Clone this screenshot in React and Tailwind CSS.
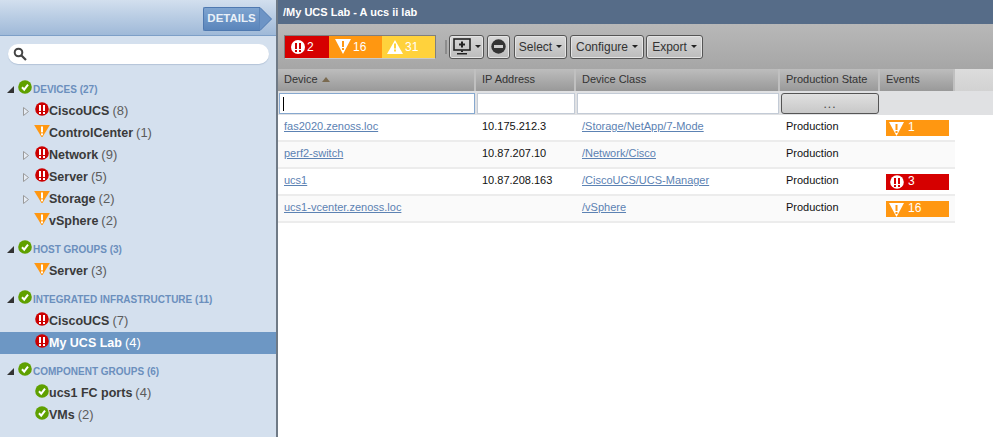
import React from 'react';

const sans = { fontFamily: '"Liberation Sans", Arial, sans-serif' };

const Bang = ({ x, y, h = 6, w = 2, fill = '#fff' }) => (
  <g fill={fill}>
    <rect x={x} y={y} width={w} height={h} />
    <rect x={x} y={y + h + 1} width={w} height={2} />
  </g>
);

const Critical = ({ size = 14 }) => (
  <svg width={size} height={size} viewBox="0 0 14 14" className="shrink-0">
    <circle cx="7" cy="7" r="6.8" fill="#cc0000" />
    <Bang x={4} y={3} />
    <Bang x={8} y={3} />
  </svg>
);

const Warn = ({ size = 16 }) => (
  <svg width={size} height={size * 0.8} viewBox="0 0 16 13" className="shrink-0">
    <path d="M0 0H16L8 13Z" fill="#ff9711" />
    <Bang x={7} y={1.5} h={6} />
  </svg>
);

const Ok = ({ size = 14 }) => (
  <svg width={size} height={size} viewBox="0 0 14 14" className="shrink-0">
    <circle cx="7" cy="7" r="6.8" fill="#5fa000" />
    <path d="M4 7.2 6.2 9.6 10 4.6" fill="none" stroke="#fff" strokeWidth="2" />
  </svg>
);

const icons = { critical: Critical, warn: Warn, ok: Ok };

const Expander = ({ open }) =>
  open ? (
    <svg width="7" height="7" viewBox="0 0 7 7" className="shrink-0"><path d="M7 0V7H0Z" fill="#333" /></svg>
  ) : (
    <svg width="6" height="9" viewBox="0 0 6 9" className="shrink-0"><path d="M.5.5 5.5 4.5.5 8.5Z" fill="#e6ecf4" stroke="#9a9a9a" /></svg>
  );

const GroupHead = ({ label, count }) => (
  <div className="flex h-[21px] items-center pl-[7px]">
    <Expander open />
    <span className="ml-[4px] -mt-[5px]"><Ok /></span>
    <span className="ml-px text-[10px] font-bold text-[#6b8fbd]">{label} <span>({count})</span></span>
  </div>
);

const Node = ({ icon, label, count, expand, selected }) => {
  const Icon = icons[icon];
  return (
    <div className={`flex h-[22px] items-center ${selected ? 'bg-[#6d97c4] text-white' : 'text-[#3a3a3a]'}`}>
      <span className="flex w-[34px] shrink-0 items-center justify-end pr-[5px]">
        {expand && <Expander />}
      </span>
      <span className="flex w-[15px] shrink-0 -mt-[4px] justify-center"><Icon /></span>
      <span className="text-[12.5px] font-bold">{label}</span>
      <span className={`ml-[3px] text-[13px] ${selected ? 'text-white' : 'text-[#5c5c5c]'}`}>({count})</span>
    </div>
  );
};

const Sidebar = () => (
  <aside className="flex w-[278px] shrink-0 flex-col border-r-2 border-[#6f7a86] bg-[#d4e0ee]">
    <div className="flex h-[36px] items-center justify-end border-b border-[#7d9fc7] bg-gradient-to-b from-[#d2dfee] to-[#9fb9d8] pr-[4px] pt-[2px]">
      <div className="flex h-[24px] items-center">
        <span className="flex h-[24px] w-[56px] items-center justify-center rounded-l-[2px] border border-r-0 border-[#4f79b0] bg-gradient-to-b from-[#7fa4d0] to-[#5a85bb] text-[11.5px] font-bold text-[#e9f0f8]">DETAILS</span>
        <svg width="13" height="24" viewBox="0 0 13 24"><path d="M0 .5H1L12.5 12 1 23.5H0Z" fill="#6d94c5" stroke="#4f79b0" /></svg>
      </div>
    </div>
    <div className="px-[8px] pt-[8px] pb-[15px]">
      <div className="flex h-[20px] w-[261px] items-center rounded-full bg-white pl-[5px] shadow-[0_1px_1px_#b4c4d8]">
        <svg width="14" height="14" viewBox="0 0 14 14"><circle cx="5.5" cy="5.5" r="3.8" fill="none" stroke="#444" strokeWidth="2" /><path d="M8.5 8.5 13 13" stroke="#444" strokeWidth="2.2" /></svg>
      </div>
    </div>
    <div className="flex flex-col gap-[7px]">
      <div>
        <GroupHead label="DEVICES" count={27} />
        <Node icon="critical" label="CiscoUCS" count={8} expand />
        <Node icon="warn" label="ControlCenter" count={1} />
        <Node icon="critical" label="Network" count={9} expand />
        <Node icon="critical" label="Server" count={5} expand />
        <Node icon="warn" label="Storage" count={2} expand />
        <Node icon="warn" label="vSphere" count={2} />
      </div>
      <div>
        <GroupHead label="HOST GROUPS" count={3} />
        <Node icon="warn" label="Server" count={3} />
      </div>
      <div>
        <GroupHead label="INTEGRATED INFRASTRUCTURE" count={11} />
        <Node icon="critical" label="CiscoUCS" count={7} />
        <Node icon="critical" label="My UCS Lab" count={4} selected />
      </div>
      <div>
        <GroupHead label="COMPONENT GROUPS" count={6} />
        <Node icon="ok" label="ucs1 FC ports" count={4} />
        <Node icon="ok" label="VMs" count={2} />
      </div>
    </div>
  </aside>
);

const Caret = () => <span className="ml-[4px] h-0 w-0 border-x-[3px] border-t-[3px] border-x-transparent border-t-[#222]" />;

const ToolBtn = ({ children, className = '' }) => (
  <button className={`flex h-[24px] items-center justify-center rounded-[3px] border border-[#555] bg-gradient-to-b from-[#d8d8d8] to-[#bcbcbc] text-[12px] text-[#333] shadow-[inset_0_0_0_1px_#e4e4e4] ${className}`}>
    {children}
  </button>
);

const Summary = ({ bg, width, icon, n }) => (
  <span className={`flex h-[22px] items-center text-[12px] text-white ${bg} ${width}`}>
    {icon}
    <span className="ml-[2px]">{n}</span>
  </span>
);

const WhiteTriangleDown = () => (
  <svg width="16" height="15" viewBox="0 0 16 15" className="ml-[6px]">
    <path d="M0 0H16L8 15Z" fill="#fff" />
    <Bang x={7} y={2} fill="#ff9711" />
  </svg>
);

const WhiteTriangleUp = () => (
  <svg width="16" height="14" viewBox="0 0 16 14" className="ml-[5px]">
    <path d="M8 0 16 14H0Z" fill="#fff" />
    <Bang x={7} y={3.5} h={5} fill="#ffd23c" />
  </svg>
);

const WhiteCircle = () => (
  <svg width="14" height="14" viewBox="0 0 14 14" className="ml-[6px]">
    <circle cx="7" cy="7" r="7" fill="#fff" />
    <Bang x={4} y={3} fill="#cc0000" />
    <Bang x={8} y={3} fill="#cc0000" />
  </svg>
);

const columns = 'grid grid-cols-[198px_100px_204px_100px_75px]';

const HeadCell = ({ children }) => (
  <div className="flex items-center border-r-2 border-[#c0c0c0] pb-[2px] pl-[6px] text-[11px] text-[#333]">{children}</div>
);

const FilterInput = ({ focused, className = '' }) => (
  <div className={`h-[21px] border bg-white ${focused ? 'border-[#86a8cf] pl-[3px]' : 'border-[#c3cbd6]'} ${className}`}>
    {focused && <div className="mt-[3px] h-[14px] w-px bg-black" />}
  </div>
);

const rows = [
  { device: 'fas2020.zenoss.loc', ip: '10.175.212.3', cls: '/Storage/NetApp/7-Mode', ev: { kind: 'warn', n: 1 } },
  { device: 'perf2-switch', ip: '10.87.207.10', cls: '/Network/Cisco' },
  { device: 'ucs1', ip: '10.87.208.163', cls: '/CiscoUCS/UCS-Manager', ev: { kind: 'critical', n: 3 } },
  { device: 'ucs1-vcenter.zenoss.loc', ip: '', cls: '/vSphere', ev: { kind: 'warn', n: 16 } },
];

const EventBar = ({ kind, n }) => (
  <div className={`flex h-[16px] w-[63px] items-center pl-[3px] text-[12px] text-white ${kind === 'warn' ? 'bg-[#ff9711]' : 'bg-[#d60000]'}`}>
    {kind === 'warn' ? (
      <svg width="15" height="15" viewBox="0 0 15 15" className="shrink-0"><path d="M0 1H15L7.5 15Z" fill="#fff" /><Bang x={6.5} y={3} fill="#ff9711" /></svg>
    ) : (
      <svg width="14" height="14" viewBox="0 0 14 14" className="ml-[1px] shrink-0"><circle cx="7" cy="7" r="6.8" fill="#fff" /><Bang x={4} y={3} fill="#d60000" /><Bang x={8} y={3} fill="#d60000" /></svg>
    )}
    <span className="ml-[4px] -mt-[2px]">{n}</span>
  </div>
);

const Row = ({ row, index }) => (
  <div className={`${columns} h-[27px] border-b-2 border-[#ececec] text-[11px] ${index % 2 ? 'bg-[#fafafa]' : 'bg-white'}`}>
    <div className="pl-[6px] pt-[3px]"><a href="#" className="text-[#5c82b3] underline">{row.device}</a></div>
    <div className="pl-[6px] pt-[3px] text-[#111]">{row.ip}</div>
    <div className="pl-[6px] pt-[3px]"><a href="#" className="text-[#5c82b3] underline">{row.cls}</a></div>
    <div className="pl-[6px] pt-[3px] text-[#111]">Production</div>
    <div className="pl-[6px] pt-[5px]">{row.ev && <EventBar {...row.ev} />}</div>
  </div>
);

const Main = () => (
  <main className="flex min-w-0 flex-1 flex-col bg-white">
    <div className="flex h-[24px] items-center bg-[#566c88] pl-[5px] text-[11px] font-bold text-white">/My UCS Lab - A ucs ii lab</div>
    <div className="flex h-[45px] items-center bg-gradient-to-b from-[#b8b8b8] to-[#a6a6a6] pl-[6px]">
      <div className="flex border-x border-t border-[#7f7f7f] border-b border-b-[#c9c9c9]">
        <Summary bg="bg-[#d60000]" width="w-[44px]" icon={<WhiteCircle />} n="2" />
        <Summary bg="bg-[#ff9711]" width="w-[53px]" icon={<WhiteTriangleDown />} n="16" />
        <Summary bg="bg-[#ffd23c]" width="w-[53px]" icon={<WhiteTriangleUp />} n="31" />
      </div>
      <span className="ml-[9px] h-[14px] w-[2px] bg-[#8c8c8c]" />
      <div className="ml-[2px] flex">
        <ToolBtn className="w-[35px]">
          <svg width="18" height="17" viewBox="0 0 18 17">
            <rect x="1" y="1" width="16" height="11" fill="none" stroke="#222" strokeWidth="1.6" />
            <path d="M9 3.5V9.5M6 6.5H12" stroke="#222" strokeWidth="2" />
            <path d="M8 12.5H10V14H8ZM4 15H14V16.4H4Z" fill="#222" />
          </svg>
          <Caret />
        </ToolBtn>
        <ToolBtn className="ml-[3px] w-[23px]">
          <svg width="15" height="15" viewBox="0 0 15 15"><circle cx="7.5" cy="7.5" r="7.2" fill="#333" /><rect x="3" y="6" width="9" height="3" fill="#ccc" /></svg>
        </ToolBtn>
        <ToolBtn className="ml-[4px] w-[53px]">Select<Caret /></ToolBtn>
        <ToolBtn className="ml-[3px] w-[74px]">Configure<Caret /></ToolBtn>
        <ToolBtn className="ml-[2px] w-[57px]">Export<Caret /></ToolBtn>
      </div>
    </div>
    <div className="flex h-[22px]">
      <div className={`${columns} bg-gradient-to-b from-[#bdbdbd] to-[#999]`}>
        <HeadCell>
          Device
          <span className="ml-[4px] h-0 w-0 border-x-[4px] border-b-[5px] border-x-transparent border-b-[#7a6a50]" />
        </HeadCell>
        <HeadCell>IP Address</HeadCell>
        <HeadCell>Device Class</HeadCell>
        <HeadCell>Production State</HeadCell>
        <HeadCell>Events</HeadCell>
      </div>
      <div className="flex-1 bg-gradient-to-b from-[#dcdcdc] to-[#d2d2d2]" />
    </div>
    <div className="flex h-[24px] bg-[#e0e1e3]">
      <div className={`${columns} items-center`}>
        <FilterInput focused className="ml-[1px] mr-[1px]" />
        <FilterInput className="mx-[1px]" />
        <FilterInput className="mx-[1px]" />
        <div className="mx-[1px] flex h-[21px] items-center justify-center rounded-[3px] border border-[#555] bg-gradient-to-b from-[#e0e0e0] to-[#c8c8c8] pt-[2px] text-[12px] tracking-[1px] text-[#444]">...</div>
        <div />
      </div>
    </div>
    <div className="w-[677px]">
      {rows.map((row, index) => <Row key={row.device} row={row} index={index} />)}
    </div>
  </main>
);

export default function App() {
  return (
    <div style={sans} className="flex h-[437px] w-[993px] overflow-hidden">
      <Sidebar />
      <Main />
    </div>
  );
}
